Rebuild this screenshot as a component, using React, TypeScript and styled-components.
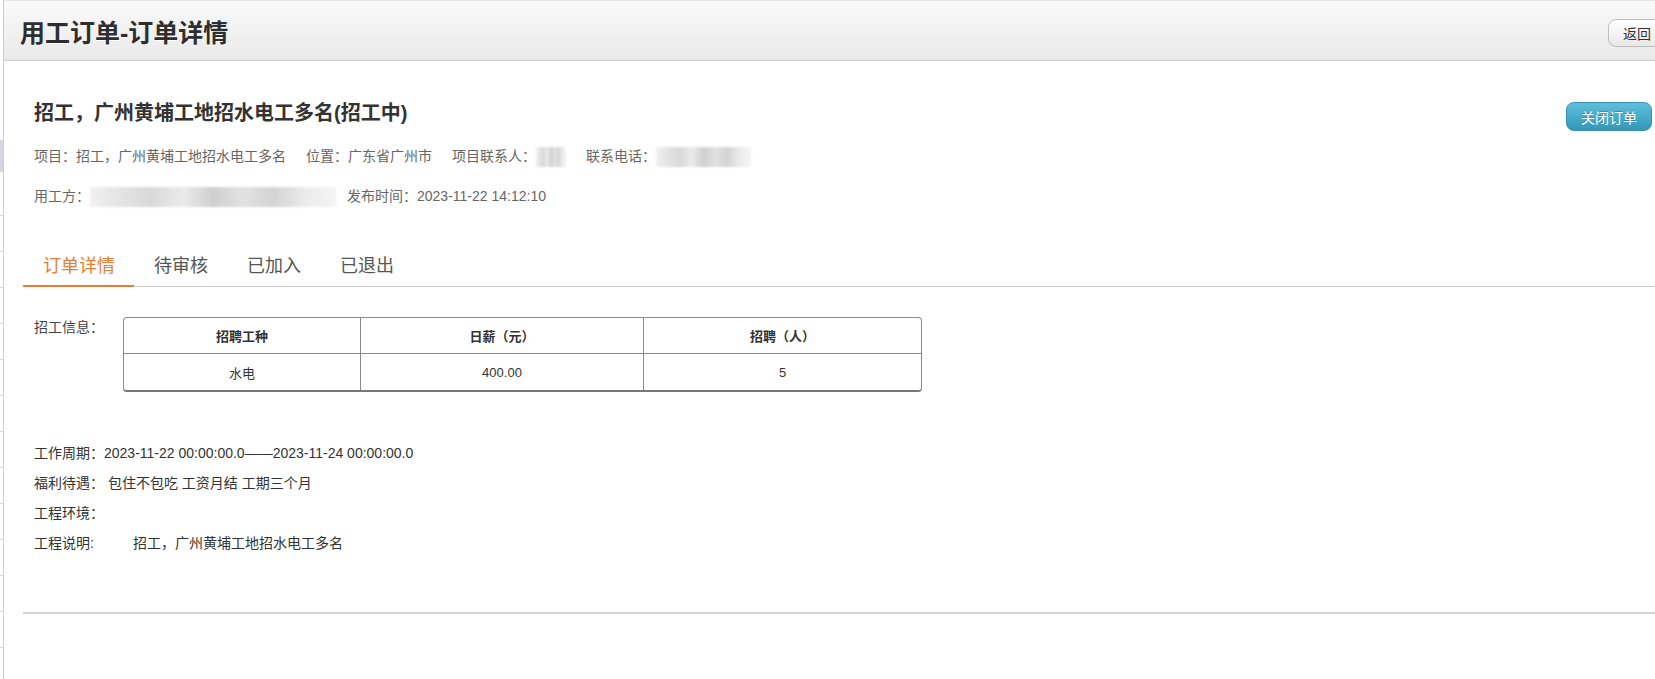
import styled, { createGlobalStyle } from 'styled-components';

const GlobalStyle = createGlobalStyle`
  html, body {
    margin: 0;
    padding: 0;
    overflow: hidden;
    background: #fff;
  }
  body {
    font-family: "Liberation Sans", "Noto Sans CJK SC", sans-serif;
    color: #333;
  }
`;

const metaItems = [
  { label: '项目：', value: '招工，广州黄埔工地招水电工多名' },
  { label: '位置：', value: '广东省广州市' },
];

const workTypes = [{ name: '水电', pay: '400.00', count: '5' }];

const infoLines = [
  { label: '工作周期：', value: '2023-11-22 00:00:00.0——2023-11-24 00:00:00.0' },
  { label: '福利待遇：', value: ' 包住不包吃 工资月结 工期三个月' },
  { label: '工程环境：', value: '' },
];

const tabs = ['订单详情', '待审核', '已加入', '已退出'];

const App = () => {
  const activeTab = 0;

  return (
    <>
      <GlobalStyle />
      <Page>
        <LeftStrip />
        <Panel>
          <Header>
            <HeaderTitle>用工订单-订单详情</HeaderTitle>
            <BackButton>返回</BackButton>
          </Header>

          <Content>
            <Summary>
              <SummaryText>
                <OrderTitle>招工，广州黄埔工地招水电工多名(招工中)</OrderTitle>
                <MetaLine>
                  {metaItems.map((m) => (
                    <MetaItem key={m.label}>
                      {m.label}
                      {m.value}
                    </MetaItem>
                  ))}
                  <MetaItem>
                    项目联系人：
                    <Mosaic width={30} />
                  </MetaItem>
                  <MetaItem>
                    联系电话：
                    <Mosaic width={95} />
                  </MetaItem>
                </MetaLine>
                <MetaLine gap={11}>
                  <MetaItem>
                    用工方：
                    <Mosaic width={246} />
                  </MetaItem>
                  <MetaItem>发布时间：2023-11-22 14:12:10</MetaItem>
                </MetaLine>
              </SummaryText>
              <CloseButton>关闭订单</CloseButton>
            </Summary>

            <TabBar>
              {tabs.map((t, i) => (
                <Tab key={t} active={i === activeTab}>
                  {t}
                </Tab>
              ))}
            </TabBar>

            <Detail>
              <RecruitRow>
                <FieldLabel>招工信息：</FieldLabel>
                <TableFrame>
                  <Table>
                    <thead>
                      <tr>
                        <Th style={{ width: 236 }}>招聘工种</Th>
                        <Th style={{ width: 282 }}>日薪（元）</Th>
                        <Th>招聘（人）</Th>
                      </tr>
                    </thead>
                    <tbody>
                      {workTypes.map((w) => (
                        <tr key={w.name}>
                          <Td>{w.name}</Td>
                          <Td>{w.pay}</Td>
                          <Td>{w.count}</Td>
                        </tr>
                      ))}
                    </tbody>
                  </Table>
                </TableFrame>
              </RecruitRow>

              <InfoList>
                {infoLines.map((l) => (
                  <InfoLine key={l.label}>
                    {l.label}
                    {l.value}
                  </InfoLine>
                ))}
                <InfoLine>
                  <InfoLabel width={99}>工程说明:</InfoLabel>
                  招工，广州黄埔工地招水电工多名
                </InfoLine>
              </InfoList>
            </Detail>

            <Divider />
          </Content>
        </Panel>
      </Page>
    </>
  );
};
export default App;

const Page = styled.div`
  display: flex;
  width: 1668px;
  height: 679px;
  overflow: hidden;
`;

const LeftStrip = styled.div`
  width: 3px;
  flex-shrink: 0;
  background:
    linear-gradient(#fff 0, #fff 140px, #d6d6e0 140px, #d6d6e0 172px, #fff 172px),
    repeating-linear-gradient(#fff 0, #fff 35px, #d8d8d8 35px, #d8d8d8 36px);
  background-size: 100% 180px, 100% 100%;
  background-repeat: no-repeat, repeat;
`;

const Panel = styled.div`
  flex: 1;
  border-left: 1px solid #cfcfcf;
  display: flex;
  flex-direction: column;
`;

const Header = styled.div`
  height: 59px;
  display: flex;
  align-items: center;
  justify-content: space-between;
  padding: 0 0 0 16px;
  background: linear-gradient(#fafafa, #e9e9e9);
  border-top: 1px solid #e6e6e6;
  border-bottom: 1px solid #cdcdcd;
  box-sizing: content-box;
`;

const HeaderTitle = styled.h1`
  margin: 0;
  font-size: 25px;
  font-weight: bold;
  color: #2e2e2e;
  text-shadow: 0 1px 0 #fff;
`;

const BackButton = styled.button`
  margin-top: 4px;
  height: 28px;
  width: 60px;
  padding: 0 0 0 14px;
  text-align: left;
  font-family: inherit;
  font-size: 14px;
  color: #333;
  border: 1px solid #bdbdbd;
  border-radius: 8px;
  background: linear-gradient(#ffffff, #e8e8e8);
`;

const Content = styled.div`
  padding: 0 16px 0 19px;
`;

const Summary = styled.div`
  display: flex;
  justify-content: space-between;
  align-items: flex-start;
  padding-top: 38px;
`;

const SummaryText = styled.div`
  padding-left: 11px;
`;

const OrderTitle = styled.h2`
  margin: 0;
  font-size: 20px;
  line-height: 28px;
  font-weight: bold;
  color: #333;
`;

const MetaLine = styled.div<{ gap?: number }>`
  display: flex;
  align-items: center;
  gap: ${(p) => p.gap ?? 20}px;
  margin-top: 19px;
  font-size: 14px;
  line-height: 21px;
  color: #666;
`;

const MetaItem = styled.span`
  display: inline-flex;
  align-items: center;
  white-space: nowrap;
`;

const Mosaic = styled.span<{ width: number }>`
  display: inline-block;
  width: ${(p) => p.width}px;
  height: 20px;
  background: linear-gradient(
    90deg,
    #f1f1f1 0%,
    #e4e4e4 12%,
    #d9d9d9 25%,
    #ebebeb 38%,
    #cfcfcf 50%,
    #e2e2e2 62%,
    #d4d4d4 75%,
    #ececec 88%,
    #f4f4f4 100%
  );
  filter: blur(1px);
`;

const CloseButton = styled.button`
  margin-top: 3px;
  height: 29px;
  width: 86px;
  padding: 0;
  font-family: inherit;
  font-size: 14px;
  color: #fff;
  border: 1px solid #3591ad;
  border-radius: 8px;
  background: linear-gradient(#5fc0dd, #3497b8);
  text-shadow: 0 -1px 0 rgba(0, 0, 0, 0.2);
`;

const TabBar = styled.div`
  display: flex;
  margin: 40px -16px 0 0;
  border-bottom: 1px solid #cfcfcf;
`;

const Tab = styled.div<{ active: boolean }>`
  height: 40px;
  line-height: 38px;
  padding: 0 19px 0 20px;
  margin-bottom: -1px;
  font-size: 18px;
  box-sizing: border-box;
  color: ${(p) => (p.active ? '#e67e33' : '#555')};
  border-bottom: 2px solid ${(p) => (p.active ? '#e67e33' : 'transparent')};
`;

const Detail = styled.div`
  padding: 30px 0 0 11px;
`;

const RecruitRow = styled.div`
  display: flex;
  align-items: flex-start;
  gap: 19px;
`;

const FieldLabel = styled.span`
  font-size: 14px;
  line-height: 20px;
  color: #444;
`;

const TableFrame = styled.div`
  width: 797px;
  border: 1px solid #8a8a8a;
  border-bottom: 2px solid #777;
  border-radius: 4px;
  overflow: hidden;
`;

const Table = styled.table`
  width: 100%;
  border-collapse: collapse;
  table-layout: fixed;
  font-size: 13px;
  color: #333;
`;

const Th = styled.th`
  height: 35px;
  padding: 0;
  font-weight: bold;
  border-right: 1px solid #8a8a8a;
  border-bottom: 1px solid #8a8a8a;
  &:last-child {
    border-right: none;
  }
`;

const Td = styled.td`
  height: 36px;
  padding: 0;
  text-align: center;
  border-right: 1px solid #8a8a8a;
  &:last-child {
    border-right: none;
  }
`;

const InfoList = styled.div`
  margin-top: 46px;
  display: flex;
  flex-direction: column;
`;

const InfoLine = styled.div`
  display: flex;
  font-size: 14px;
  line-height: 30px;
  color: #333;
  white-space: pre;
`;

const InfoLabel = styled.span<{ width: number }>`
  width: ${(p) => p.width}px;
`;

const Divider = styled.div`
  margin: 54px -16px 0 0;
  border-top: 2px solid #d4d4d4;
`;
